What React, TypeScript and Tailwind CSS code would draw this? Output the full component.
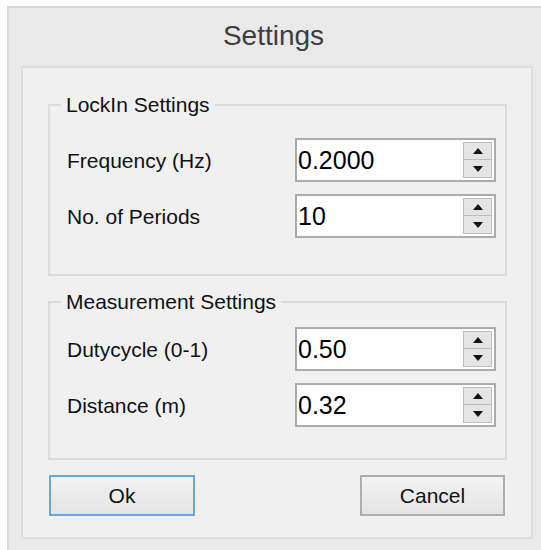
import React, { useState } from "react";

const font = { fontFamily: '"Liberation Sans", Arial, sans-serif' };

const Arrow = ({ up }: { up?: boolean }) => (
  <svg width="10" height="6" viewBox="0 0 10 6">
    {up ? <polygon points="0,6 10,6 5,0" fill="#111" /> : <polygon points="0,0 10,0 5,6" fill="#111" />}
  </svg>
);

interface SpinProps {
  value: string;
}

const SpinBox = ({ value }: SpinProps) => (
  <div className="flex h-[44px] w-[201px] items-center border-2 border-[#ababab] bg-white">
    <span className="pl-[1px] text-[25px] leading-none text-black">{value}</span>
    <div className="ml-auto mr-[2px] flex w-[29px] flex-col">
      <div className="flex h-[18px] items-center justify-center border border-[#bcbcbc] bg-[#e4e4e4]">
        <Arrow up />
      </div>
      <div className="flex h-[18px] items-center justify-center border border-t-0 border-[#bcbcbc] bg-[#e4e4e4]">
        <Arrow />
      </div>
    </div>
  </div>
);

const Row = ({ label, value }: { label: string; value: string }) => (
  <div className="flex items-center justify-between">
    <span className="text-[21px] leading-none text-[#111]">{label}</span>
    <SpinBox value={value} />
  </div>
);

const Group = ({
  title,
  className,
  children,
}: {
  title: string;
  className: string;
  children: React.ReactNode;
}) => (
  <fieldset className="border-2 border-[#dcdcdc]">
    <legend className="ml-[11px] px-[5px] text-[21px] leading-[22px] text-[#111]">{title}</legend>
    <div className={className}>{children}</div>
  </fieldset>
);

export default function App() {
  const [lockIn] = useState({ frequency: "0.2000", periods: "10" });
  const [measurement] = useState({ dutycycle: "0.50", distance: "0.32" });

  return (
    <div className="h-[550px] w-[541px] overflow-hidden bg-white pl-[7px] pt-[6px]" style={font}>
      <div className="h-[546px] border-l-2 border-t-2 border-[#d9d9d9] bg-[#e9e9e9] pl-[12px]">
        <div className="h-[58px] pr-[15px] pt-[14px] text-center text-[28px] leading-none text-[#3d3d3d]">
          Settings
        </div>

        <div className="h-[473px] w-[512px] border-2 border-[#dddddd] bg-[#f0f0f0] pl-[25px] pr-[24px] pt-[26px]">
          <Group title="LockIn Settings" className="flex flex-col gap-[12px] pb-[36px] pl-[17px] pr-[9px] pt-[22px]">
            <Row label="Frequency (Hz)" value={lockIn.frequency} />
            <Row label="No. of Periods" value={lockIn.periods} />
          </Group>

          <div className="mt-[15px]">
            <Group
              title="Measurement Settings"
              className="flex flex-col gap-[12px] pb-[31px] pl-[17px] pr-[9px] pt-[14px]"
            >
              <Row label="Dutycycle (0-1)" value={measurement.dutycycle} />
              <Row label="Distance (m)" value={measurement.distance} />
            </Group>
          </div>

          <div className="ml-[1px] mr-[2px] mt-[15px] flex justify-between">
            <button className="h-[41px] w-[146px] border-2 border-[#63a6ea] bg-gradient-to-b from-[#f3f3f3] to-[#e4e4e4] text-[21px] leading-none text-[#111]">
              Ok
            </button>
            <button className="h-[41px] w-[145px] border-2 border-[#adadad] bg-gradient-to-b from-[#f3f3f3] to-[#e4e4e4] text-[21px] leading-none text-[#111]">
              Cancel
            </button>
          </div>
        </div>
      </div>
    </div>
  );
}
